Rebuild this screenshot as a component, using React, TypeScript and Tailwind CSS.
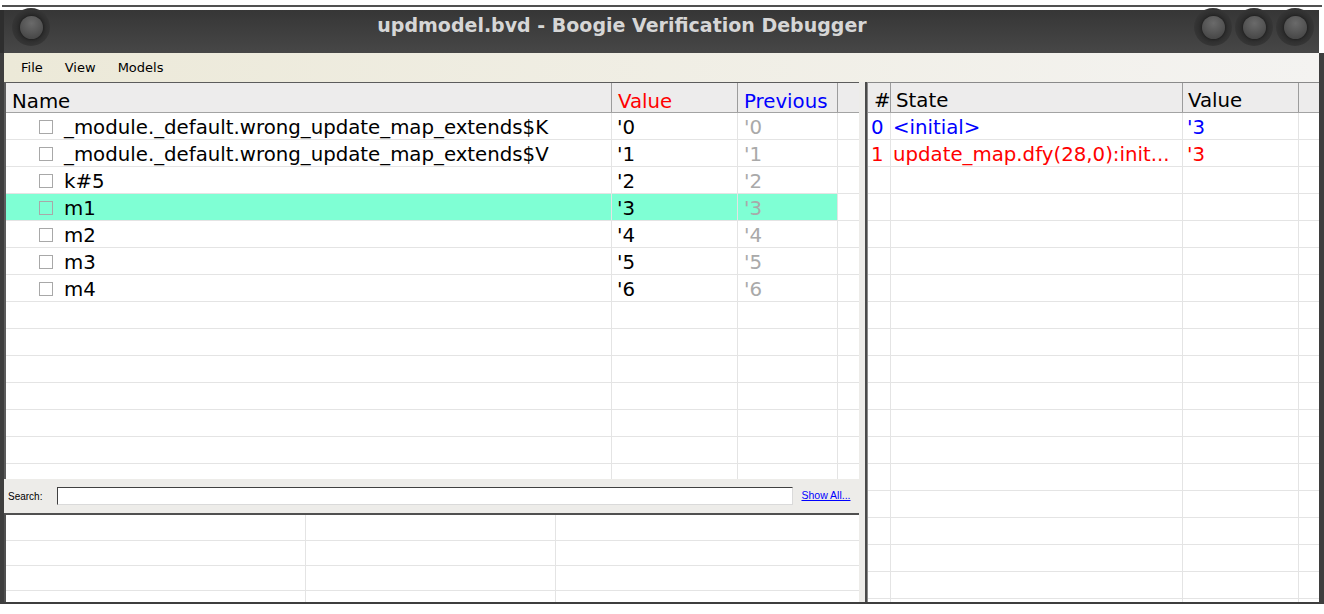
// App.tsx - Boogie Verification Debugger window
import React from 'react';

const variables = [
  { name: '_module._default.wrong_update_map_extends$K', value: "'0" },
  { name: '_module._default.wrong_update_map_extends$V', value: "'1" },
  { name: 'k#5', value: "'2" },
  { name: 'm1', value: "'3", selected: true },
  { name: 'm2', value: "'4" },
  { name: 'm3', value: "'5" },
  { name: 'm4', value: "'6" },
];

const states = [
  { id: '0', label: '<initial>', value: "'3", color: 'text-[#0000ff]' },
  { id: '1', label: 'update_map.dfy(28,0):init...', value: "'3", color: 'text-[#ff0000]' },
];

function Knob() {
  return (
    <div className="w-[38px] h-[38px] rounded-full bg-[radial-gradient(circle_at_50%_50%,#2a2a2a_0%,#2e2e2e_50%,#363636_72%,#424242_100%)] flex items-center justify-center">
      <div className="w-[23px] h-[23px] rounded-full bg-[radial-gradient(circle_at_50%_32%,#6a6a6a_0%,#575757_45%,#3e3e3e_100%)] shadow-[0_0_3px_rgba(0,0,0,0.6)]" />
    </div>
  );
}

export default function App() {
  const leftRows = Array.from({ length: 14 }, (_, i) => variables[i]);
  const rightRows = Array.from({ length: 19 }, (_, i) => states[i]);

  return (
    <div className="w-[1324px] h-[614px] bg-white overflow-hidden font-['DejaVu_Sans',sans-serif] text-black">
      <div className="h-[5px]" />
      <div className="h-[2px] ml-[2px] mr-[2px] bg-[#505050]" />
      <div className="h-[3px]" />

      {/* title bar */}
      <div className="w-[1319px] h-[43px] flex items-start bg-gradient-to-b from-[#363636] to-[#474747] border-l-4 border-[#2e2e2e]">
        <div className="ml-[8px] -mt-[2px]">
          <Knob />
        </div>
        <div className="flex-1 text-center mt-[4px] leading-[22px] text-[19px] font-bold text-[#d6d6d6]">
          updmodel.bvd - Boogie Verification Debugger
        </div>
        <div className="flex gap-[3px] -mt-[2px] mr-[5px]">
          <Knob />
          <Knob />
          <Knob />
        </div>
      </div>

      <div className="w-[1324px] border-l-4 border-r-[5px] border-b-2 border-[#3e3e3e]">
        {/* menu bar */}
        <div className="h-[29px] flex items-center gap-[22px] pl-[17px] text-[13px] bg-gradient-to-r from-[#ece9d8] to-[#f4f3f1]">
          <span>File</span>
          <span>View</span>
          <span>Models</span>
        </div>

        <div className="h-[520px] flex">
          {/* left pane */}
          <div className="w-[855px] flex flex-col">
            <div className="h-[397px] border-l-2 border-t border-[#5c5c5c] overflow-hidden text-[19.75px]">
              <div className="h-[30px] flex bg-[#edecec] border-b border-[#a3a3a3] leading-[30px]">
                <div className="w-[606px] pl-[6px] pt-[4px] border-r border-[#9c9c9c]">Name</div>
                <div className="w-[126px] pl-[6px] pt-[4px] border-r border-[#9c9c9c] text-[#ff0000]">Value</div>
                <div className="w-[100px] pl-[6px] pt-[4px] border-r border-[#9c9c9c] text-[#0000ff]">Previous</div>
                <div className="flex-1" />
              </div>
              {leftRows.map((row, i) => (
                <div key={i} className="h-[27px] flex border-b border-[#e4e4e4] leading-[30px]">
                  <div className={`w-[606px] flex items-start border-r border-[#e4e4e4] ${row?.selected ? 'bg-[#7fffd4]' : ''}`}>
                    {row && (
                      <>
                        <div className="ml-[33px] mt-[7px] w-[14px] h-[14px] border border-[#a8a8a8]" />
                        <span className="ml-[11px]">{row.name}</span>
                      </>
                    )}
                  </div>
                  <div className={`w-[126px] pl-[5px] border-r border-[#e4e4e4] ${row?.selected ? 'bg-[#7fffd4]' : ''}`}>
                    {row?.value}
                  </div>
                  <div className={`w-[100px] pl-[6px] border-r border-[#e4e4e4] text-[#a9a9a9] ${row?.selected ? 'bg-[#7fffd4]' : ''}`}>
                    {row?.value}
                  </div>
                  <div className="flex-1" />
                </div>
              ))}
            </div>

            {/* search bar */}
            <div className="h-[34px] flex items-center bg-[#edece9] pl-[4px] font-['Liberation_Sans',sans-serif] text-[10px]">
              <span>Search:</span>
              <div className="ml-[15px] w-[736px] h-[18px] bg-white border border-t-[#404040] border-l-[#404040] border-b-[#dadada] border-r-[#dadada]" />
              <span className="ml-[8px] text-[10.5px] text-[#0000ff] underline">Show All...</span>
            </div>

            {/* bottom table */}
            <div className="flex-1 border-l-2 border-t-2 border-[#505050] overflow-hidden">
              {[26, 25, 25, 25].map((h, i) => (
                <div key={i} className="flex border-b border-[#e4e4e4]" style={{ height: h }}>
                  <div className="w-[300px] border-r border-[#e4e4e4]" />
                  <div className="w-[250px] border-r border-[#e4e4e4]" />
                  <div className="flex-1" />
                </div>
              ))}
            </div>
          </div>

          {/* splitter */}
          <div className="w-[6px] bg-[#edece9]" />
          <div className="w-[2px] bg-[#4a4a4a]" />

          {/* right pane */}
          <div className="flex-1 border-l border-t border-[#8a8a8a] overflow-hidden text-[19.75px]">
            <div className="h-[30px] flex bg-[#edecec] border-b border-[#a3a3a3] leading-[30px]">
              <div className="w-[23px] pl-[6px] pt-[3px] border-r border-[#9c9c9c]">#</div>
              <div className="w-[292px] pl-[5px] pt-[3px] border-r border-[#9c9c9c]">State</div>
              <div className="w-[116px] pl-[5px] pt-[3px] border-r border-[#9c9c9c]">Value</div>
              <div className="flex-1" />
            </div>
            {rightRows.map((row, i) => (
              <div key={i} className={`h-[27px] flex border-b border-[#e4e4e4] leading-[30px] ${row?.color ?? ''}`}>
                <div className="w-[23px] pl-[3px] border-r border-[#e4e4e4]">{row?.id}</div>
                <div className="w-[292px] pl-[2px] border-r border-[#e4e4e4] whitespace-nowrap">{row?.label}</div>
                <div className="w-[116px] pl-[4px] border-r border-[#e4e4e4]">{row?.value}</div>
                <div className="flex-1" />
              </div>
            ))}
          </div>
        </div>
      </div>
    </div>
  );
}
